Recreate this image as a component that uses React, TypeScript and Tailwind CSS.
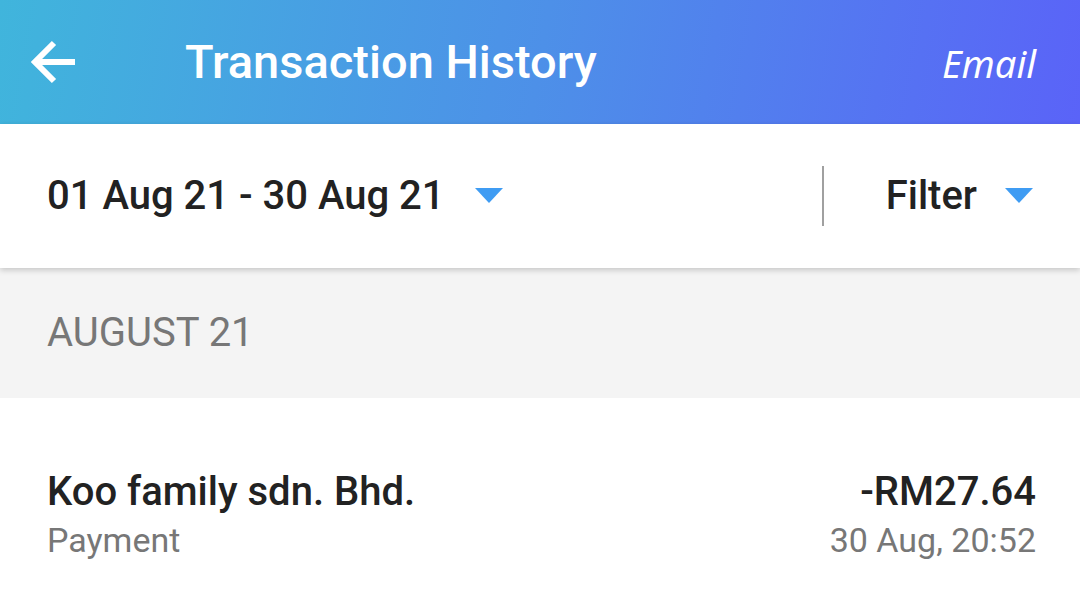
type Transaction = { name: string; type: string; amount: string; date: string };

const transactions: Transaction[] = [
  { name: "Koo family sdn. Bhd.", type: "Payment", amount: "-RM27.64", date: "30 Aug, 20:52" },
];

function Caret() {
  return (
    <svg aria-hidden="true" className="h-4 w-7 fill-[#3f9cf3]" viewBox="0 0 28 16">
      <path d="M0 0H28L14 15Z" />
    </svg>
  );
}

export default function App() {
  return (
    <div className="min-h-screen bg-white font-['Roboto',sans-serif] text-[#222222]">
      <header className="flex h-[124px] items-center bg-linear-[100deg] from-[#40b5dc] via-[#4d90e8] to-[#5a63f8] pr-11 pl-[30px] text-white">
        <button type="button" aria-label="Back">
          <svg aria-hidden="true" className="h-11 w-[46px]" viewBox="0 0 46 44" fill="none" stroke="currentColor" strokeWidth="6">
            <path d="M45 22H5M24 3L5 22L24 41" />
          </svg>
        </button>
        <div className="ml-[109px] flex flex-1 items-baseline justify-between">
          <h1 className="text-[47px] leading-[48px] font-medium">Transaction History</h1>
          <button type="button" className="font-['Noto_Sans','Open_Sans',sans-serif] text-[38px] leading-[48px] italic">
            Email
          </button>
        </div>
      </header>
      <div className="relative flex h-36 items-center bg-white pr-[47px] pl-[47px] text-[40px] leading-none font-medium shadow-[0_2px_6px_rgba(0,0,0,0.2)]">
        <button type="button" className="flex items-center gap-[30px]">
          01 Aug 21 - 30 Aug 21
          <Caret />
        </button>
        <button type="button" className="ml-auto flex h-[60px] items-center gap-7 border-l-2 border-[#a0a0a0] pl-[62px]">
          Filter
          <Caret />
        </button>
      </div>
      <section>
        <h2 className="flex h-[130px] items-center bg-[#f4f4f4] px-[47px] text-[40px] leading-none text-[#777777]">AUGUST 21</h2>
        <ul>
          {transactions.map((item) => (
            <li key={item.name} className="flex justify-between pt-[70px] pr-11 pb-12 pl-[47px]">
              <div>
                <p className="text-[40px] leading-[48px] font-medium">{item.name}</p>
                <p className="text-[34px] leading-[48px] text-[#777777]">{item.type}</p>
              </div>
              <div className="text-right">
                <p className="text-[40px] leading-[48px] font-medium">{item.amount}</p>
                <p className="text-[34px] leading-[48px] text-[#777777]">{item.date}</p>
              </div>
            </li>
          ))}
        </ul>
      </section>
    </div>
  );
}
